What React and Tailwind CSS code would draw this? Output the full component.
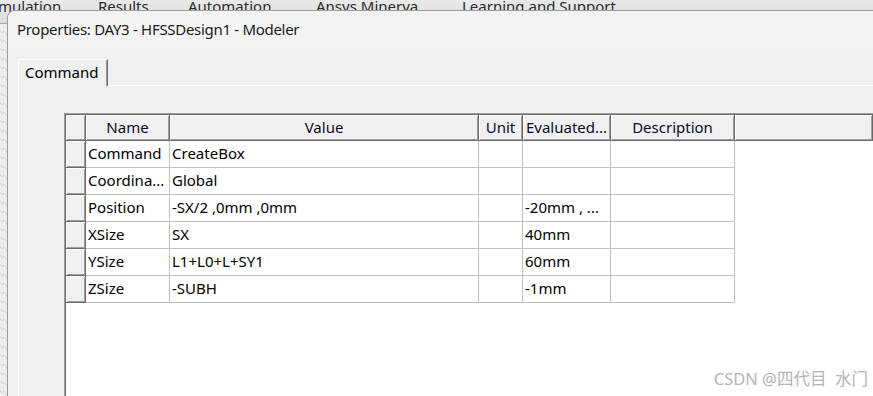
import React from "react";

const cols = "grid-cols-[20px_84px_309px_44px_88px_124px_1fr]";

const rows = [
  ["Command", "CreateBox", "", ""],
  ["Coordina...", "Global", "", ""],
  ["Position", "-SX/2 ,0mm ,0mm", "", "-20mm , ..."],
  ["XSize", "SX", "", "40mm"],
  ["YSize", "L1+L0+L+SY1", "", "60mm"],
  ["ZSize", "-SUBH", "", "-1mm"],
];

const headCell =
  "h-[26px] pb-[1px] bg-[#f0f0f0] border-r border-b border-[#6a6a6a] shadow-[inset_1px_1px_0_#ffffff,inset_-1px_-1px_0_#a0a0a0] flex items-center justify-center whitespace-nowrap overflow-hidden text-[#0a0a28]";
const dataCell =
  "h-[27px] pb-[2px] border-r border-b border-[#c0c0c0] flex items-center pl-[2px] whitespace-nowrap overflow-hidden text-black";
const rowHead =
  "h-[27px] bg-[#f0f0f0] border-r border-b border-[#6a6a6a] shadow-[inset_1px_1px_0_#ffffff,inset_-1px_-1px_0_#a0a0a0]";

function Waves() {
  const lines = [];
  for (let y = 30; y < 400; y += 9) {
    lines.push(
      <polyline
        key={y}
        points={`0,${y} 2,${y + 3} 4,${y + 1} 7,${y + 5}`}
        fill="none"
        stroke="#c9c9d9"
        strokeWidth="0.8"
      />
    );
  }
  return (
    <svg width="7" height="372" className="block">
      <g transform="translate(0,-24)">{lines}</g>
    </svg>
  );
}

export default function App() {
  return (
    <div className="relative w-[873px] h-[396px] overflow-hidden bg-[#ededed] font-['Noto_Sans',sans-serif]">
      {/* background application */}
      <div className="h-[24px] bg-gradient-to-b from-[#e9e9e9] to-[#dcdcdc] border-b border-[#a8a8a8] overflow-hidden">
        <div className="flex -ml-[2px] -mt-[1px] text-[15px] leading-[15px] text-[#2a2a2a] whitespace-nowrap">
          <span className="w-[100px]">mulation</span>
          <span className="w-[90px]">Results</span>
          <span className="w-[128px]">Automation</span>
          <span className="w-[146px]">Ansys Minerva</span>
          <span>Learning and Support</span>
        </div>
      </div>
      <Waves />

      {/* dialog window */}
      <div className="absolute left-[7px] top-[10px] right-0 bottom-0 flex flex-col bg-[#f0f0f0] border-l border-t border-[#9c9c9c] rounded-tl-[8px] overflow-hidden">
        <div className="h-[37px] shrink-0 bg-[#f3f3f3] flex items-center pl-[9px] text-[15px] tracking-[-0.3px] text-[#1a1a1a] whitespace-nowrap">
          Properties: DAY3 - HFSSDesign1 - Modeler
        </div>
        <div className="flex-1 flex flex-col pl-[10px] pt-[11px]">
          <div className="flex h-[27px] shrink-0">
            <div className="w-[90px] h-[27px] pb-[2px] bg-[#f0f0f0] border-l border-t border-white border-r border-r-[#6a6a6a] shadow-[inset_-1px_0_0_#a0a0a0] rounded-tl-[2px] flex items-center pl-[6px] text-[15px] text-black">
              Command
            </div>
            <div className="flex-1 border-b border-white" />
          </div>
          <div className="flex-1 border-l border-white pl-[45px] pt-[27px] flex flex-col">
            <div className="flex-1 bg-white border-l border-t border-[#a0a0a0] shadow-[inset_1px_1px_0_#696969] pl-[1px] pt-[1px] text-[15px]">
              <div className={`grid ${cols}`}>
                <div className={headCell} />
                <div className={headCell}>Name</div>
                <div className={headCell}>Value</div>
                <div className={headCell}>Unit</div>
                <div className={headCell}>Evaluated...</div>
                <div className={headCell}>Description</div>
                <div className={headCell} />
                {rows.map((r, i) => (
                  <React.Fragment key={i}>
                    <div className={rowHead} />
                    <div className={dataCell}>{r[0]}</div>
                    <div className={dataCell}>{r[1]}</div>
                    <div className={dataCell}>{r[2]}</div>
                    <div className={dataCell}>{r[3]}</div>
                    <div className={dataCell} />
                    <div className="h-[27px]" />
                  </React.Fragment>
                ))}
              </div>
            </div>
          </div>
        </div>
      </div>

      {/* watermark */}
      <div className="absolute right-[5px] bottom-[4px] text-[16.5px] text-[#b3b3b3] whitespace-nowrap font-['Noto_Sans','Noto_Sans_CJK_SC',sans-serif]">
        CSDN @四代目&nbsp;&nbsp;水门
      </div>
    </div>
  );
}
